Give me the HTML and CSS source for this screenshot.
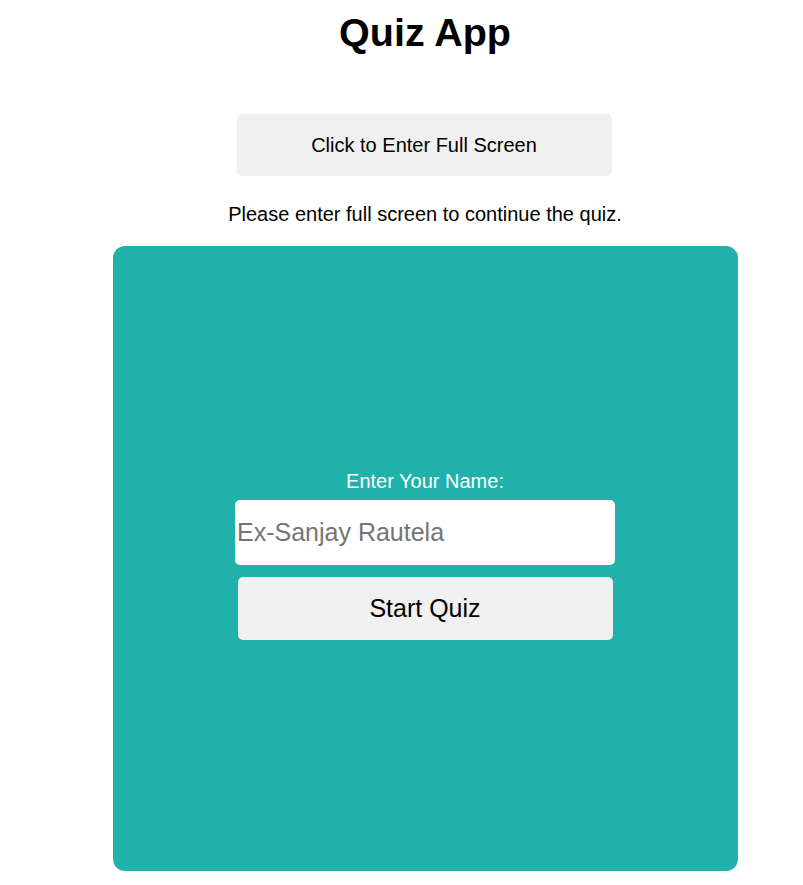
FILE: index.html
```html
<!DOCTYPE html>
<html lang="en">
<head>
<meta charset="utf-8">
<title>Quiz App</title>
<link rel="stylesheet" href="styles.css">
</head>
<body>
<div class="page">
  <h1 class="title">Quiz App</h1>
  <button class="fs-btn" type="button">Click to Enter Full Screen</button>
  <p class="notice">Please enter full screen to continue the quiz.</p>
  <div class="card">
    <label class="name-label" for="name">Enter Your Name:</label>
    <input class="name-input" id="name" type="text" placeholder="Ex-Sanjay Rautela">
    <button class="start-btn" type="button">Start Quiz</button>
  </div>
</div>
</body>
</html>
```

FILE: styles.css
```css
html, body {
  margin: 0;
  padding: 0;
  background: #ffffff;
}

body {
  font-family: "Liberation Sans", Arial, sans-serif;
  color: #000;
}

.page {
  display: flex;
  flex-direction: column;
  align-items: center;
  padding: 10px 8px 0 55px;
}

.title {
  margin: 0;
  font-size: 39.5px;
  line-height: 44px;
  font-weight: bold;
}

.fs-btn {
  margin-top: 60px;
  margin-left: -2px;
  width: 375px;
  height: 62px;
  border: none;
  border-radius: 5px;
  background: #f0f0f0;
  font-family: "Liberation Sans", Arial, sans-serif;
  font-size: 20px;
  line-height: 24px;
  color: #000;
  padding: 0;
}

.notice {
  margin: 26px 0 20px;
  font-size: 20px;
  line-height: 24px;
}

.card {
  width: 625px;
  height: 625px;
  border-radius: 12px;
  background: #20b2aa;
  display: flex;
  flex-direction: column;
  align-items: center;
  justify-content: center;
}

.name-label {
  color: #ffffff;
  font-size: 20px;
  line-height: 24px;
  margin-bottom: 7px;
}

.name-input {
  box-sizing: border-box;
  width: 380px;
  height: 65px;
  border: none;
  border-radius: 5px;
  background: #ffffff;
  padding: 0 2px;
  font-family: "Liberation Sans", Arial, sans-serif;
  font-size: 25px;
  color: #000;
  outline: none;
}

.name-input::placeholder {
  color: #757575;
}

.start-btn {
  margin-top: 12px;
  margin-bottom: 8px;
  width: 375px;
  height: 63px;
  border: none;
  border-radius: 5px;
  background: #f0f0f0;
  font-family: "Liberation Sans", Arial, sans-serif;
  font-size: 25px;
  color: #000;
  padding: 0;
}
```
